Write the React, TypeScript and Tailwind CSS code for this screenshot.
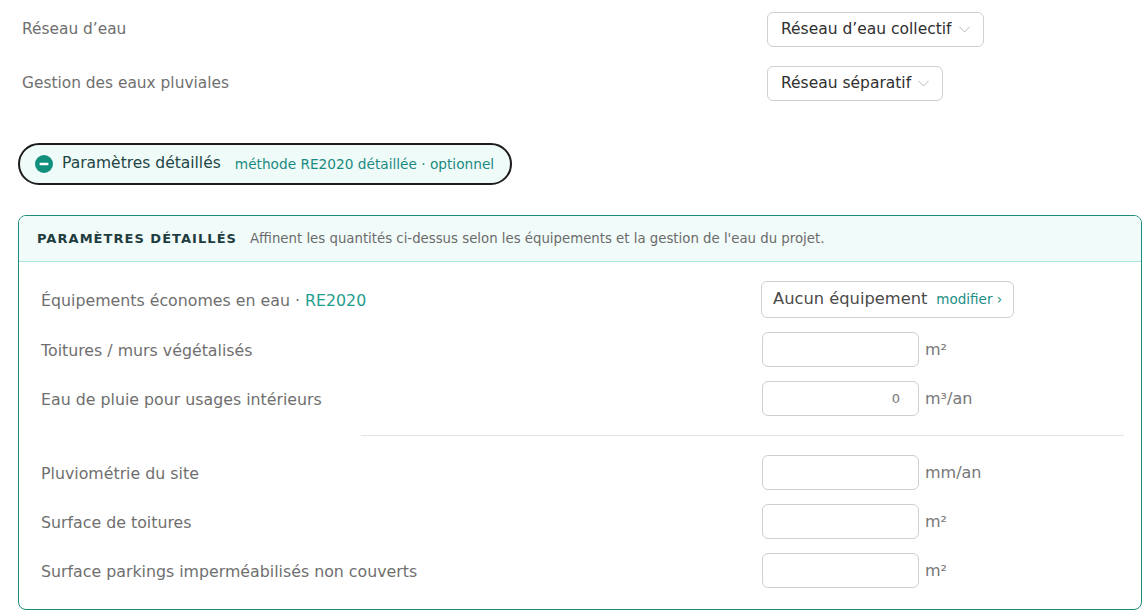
import { ReactNode } from "react";

const font = "font-['DejaVu_Sans',sans-serif]";

function Chevron() {
  return (
    <svg width="11" height="7" viewBox="0 0 11 7" className="shrink-0">
      <path d="M0.5 0.8 L5.5 6 L10.5 0.8" fill="none" stroke="#b9b9b9" strokeWidth="1" />
    </svg>
  );
}

function SelectBox({ value }: { value: string }) {
  return (
    <div className="inline-flex h-[35px] items-center gap-[7px] rounded-[6px] border border-[#cfcfcf] bg-white pl-[13px] pr-[13px] text-[15.5px] text-[#2f2f2f]">
      <span>{value}</span>
      <Chevron />
    </div>
  );
}

function NumberField({ value, unit }: { value?: string; unit: string }) {
  return (
    <div className="flex items-center gap-[6px]">
      <div className="flex h-[35px] w-[157px] items-center justify-end rounded-[6px] border border-[#cfcfcf] bg-white pr-[18px] text-[13px] text-[#777]">
        {value}
      </div>
      <span className="text-[16px] text-[#777]">{unit}</span>
    </div>
  );
}

function Row({ label, children }: { label: ReactNode; children: ReactNode }) {
  return (
    <div className="flex items-center">
      <div className="w-[721px] pt-[2px] text-[15.8px] text-[#6f6f6f]">{label}</div>
      {children}
    </div>
  );
}

export default function App() {
  return (
    <div className={`min-h-screen bg-white pl-[18px] pr-[2px] ${font}`}>
      {/* Réseaux */}
      <div className="flex flex-col gap-[19px] pl-[4px] pt-[12px]">
        <div className="flex items-center">
          <div className="w-[745px] pt-[1px] text-[15.4px] text-[#6f6f6f]">Réseau d’eau</div>
          <SelectBox value="Réseau d’eau collectif" />
        </div>
        <div className="flex items-center">
          <div className="w-[745px] pt-[1px] text-[15.4px] text-[#6f6f6f]">Gestion des eaux pluviales</div>
          <SelectBox value="Réseau séparatif" />
        </div>
      </div>

      {/* Toggle */}
      <div className="mt-[42px] inline-flex h-[42px] items-center rounded-full border-2 border-[#1c1c1c] bg-[#effbf9] pl-[15px] pr-[16px]">
        <svg width="18" height="18" viewBox="0 0 18 18" className="shrink-0">
          <circle cx="9" cy="9" r="9" fill="#138f7e" />
          <rect x="4.5" y="7.8" width="9" height="2.4" rx="1" fill="#fff" />
        </svg>
        <span className="ml-[9px] text-[15.5px] text-[#1f4545]">Paramètres détaillés</span>
        <span className="ml-[14px] text-[13.7px] text-[#1b8a80]">méthode RE2020 détaillée · optionnel</span>
      </div>

      {/* Panel */}
      <div className="mt-[30px] overflow-hidden rounded-[8px] border border-[#1c8d7d]">
        <div className="flex h-[46px] items-center gap-[13px] border-b border-[#a9e6da] bg-[#f1fbf9] px-[18px]">
          <span className="text-[13px] font-bold tracking-[0.08em] text-[#1e3d3f]">PARAMÈTRES DÉTAILLÉS</span>
          <span className="text-[13.3px] text-[#6b6b6b]">
            Affinent les quantités ci-dessus selon les équipements et la gestion de l'eau du projet.
          </span>
        </div>
        <div className="flex flex-col pb-[21px] pl-[22px] pr-[17px] pt-[19px]">
          <div className="flex flex-col gap-[14px]">
            <Row
              label={
                <>
                  Équipements économes en eau · <span className="text-[#1f9e8d]">RE2020</span>
                </>
              }
            >
              <div className="-ml-[1px] flex h-[37px] items-center gap-[9px] rounded-[6px] border border-[#cfcfcf] bg-white px-[11px]">
                <span className="text-[16.3px] text-[#4a4a4a]">Aucun équipement</span>
                <span className="text-[13.5px] text-[#1b8f85]">modifier ›</span>
              </div>
            </Row>
            <Row label="Toitures / murs végétalisés">
              <NumberField unit="m²" />
            </Row>
            <Row label="Eau de pluie pour usages intérieurs">
              <NumberField value="0" unit="m³/an" />
            </Row>
          </div>
          <div className="my-[19px] ml-[320px] border-t border-[#e2e2e2]" />
          <div className="flex flex-col gap-[14px]">
            <Row label="Pluviométrie du site">
              <NumberField unit="mm/an" />
            </Row>
            <Row label="Surface de toitures">
              <NumberField unit="m²" />
            </Row>
            <Row label="Surface parkings imperméabilisés non couverts">
              <NumberField unit="m²" />
            </Row>
          </div>
        </div>
      </div>
    </div>
  );
}
